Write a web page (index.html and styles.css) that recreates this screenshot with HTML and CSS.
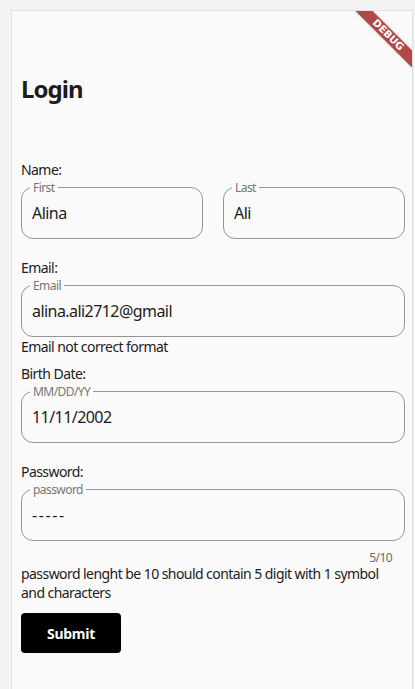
FILE: index.html
```html
<!DOCTYPE html>
<html lang="en">
<head>
<meta charset="utf-8">
<title>Login</title>
<link rel="stylesheet" href="styles.css">
</head>
<body>
<div class="frame">
  <div class="banner">DEBUG</div>
  <h1 class="title">Login</h1>

  <div class="label label--name">Name:</div>
  <div class="row">
    <div class="field"><span class="float">First</span><span class="value">Alina</span></div>
    <div class="field"><span class="float">Last</span><span class="value">Ali</span></div>
  </div>

  <div class="label label--email">Email:</div>
  <div class="field"><span class="float">Email</span><span class="value">alina.ali2712@gmail</span></div>
  <div class="note note--error">Email not correct format</div>

  <div class="label label--birth">Birth Date:</div>
  <div class="field"><span class="float">MM/DD/YY</span><span class="value">11/11/2002</span></div>

  <div class="label label--password">Password:</div>
  <div class="field"><span class="float">password</span><span class="value value--masked">-----</span></div>
  <div class="counter">5/10</div>
  <div class="note note--help">password lenght be 10 should contain 5 digit with 1 symbol and characters</div>

  <button class="submit">Submit</button>
</div>
</body>
</html>
```

FILE: styles.css
```css
html, body {
  margin: 0;
  padding: 0;
}

body {
  background: #f3f3f3;
  font-family: "Noto Sans", "Open Sans", sans-serif;
  color: #1d1b20;
}

.frame {
  position: relative;
  overflow: hidden;
  box-sizing: border-box;
  margin: 10px 2px 0 11px;
  min-height: calc(100vh - 10px);
  background: #fafafa;
  border: 1px solid #e0e0e0;
  border-bottom: none;
  padding: 62px 7px 0 9px;
  letter-spacing: -0.035em;
}

.banner {
  position: absolute;
  top: 18px;
  right: -16px;
  width: 80px;
  height: 12px;
  background: #b04848;
  box-shadow: 0 0 3px rgba(0, 0, 0, 0.25);
  transform: rotate(45deg);
  color: #ffffff;
  font-family: "DejaVu Sans", sans-serif;
  font-weight: 900;
  font-size: 10px;
  line-height: 12px;
  text-align: center;
  letter-spacing: 0;
}

.title {
  margin: 0;
  font-size: 24px;
  line-height: 32px;
  font-weight: 700;
  color: #1d1b20;
  letter-spacing: -0.04em;
}

.label {
  font-size: 14px;
  line-height: 16px;
  color: #1d1b20;
}

.label--name { margin-top: 57px; }
.label--email { margin-top: 21px; }
.label--birth { margin-top: 10px; }
.label--password { margin-top: 21px; }

.row {
  display: grid;
  grid-template-columns: 1fr 1fr;
  gap: 20px;
  margin-top: 9px;
}

.row .field {
  margin-top: 0;
}

.field {
  position: relative;
  box-sizing: border-box;
  height: 52px;
  margin-top: 9px;
  border: 1px solid #949494;
  border-radius: 12px;
  display: flex;
  align-items: center;
  padding: 0 10px;
}

.float {
  position: absolute;
  top: -6px;
  left: 8px;
  padding: 0 3px;
  background: #fafafa;
  font-size: 12px;
  line-height: 11px;
  color: #767676;
}

.value {
  font-size: 16px;
  line-height: 22px;
  color: #1d1b20;
}

.value--masked {
  letter-spacing: 1.6px;
}

.note {
  font-size: 14px;
  color: #1d1b20;
}

.note--error {
  line-height: 19px;
}

.counter {
  margin-top: 10px;
  padding-right: 13px;
  text-align: right;
  font-size: 12px;
  line-height: 14px;
  color: #6b6b6b;
}

.note--help {
  line-height: 18.5px;
}

.submit {
  display: block;
  margin-top: 11px;
  width: 100px;
  height: 40px;
  border: none;
  border-radius: 4px;
  background: #000000;
  color: #ffffff;
  font-family: "Noto Sans", "Open Sans", sans-serif;
  font-size: 14px;
  font-weight: 700;
  letter-spacing: -0.02em;
  padding: 0;
}
```
